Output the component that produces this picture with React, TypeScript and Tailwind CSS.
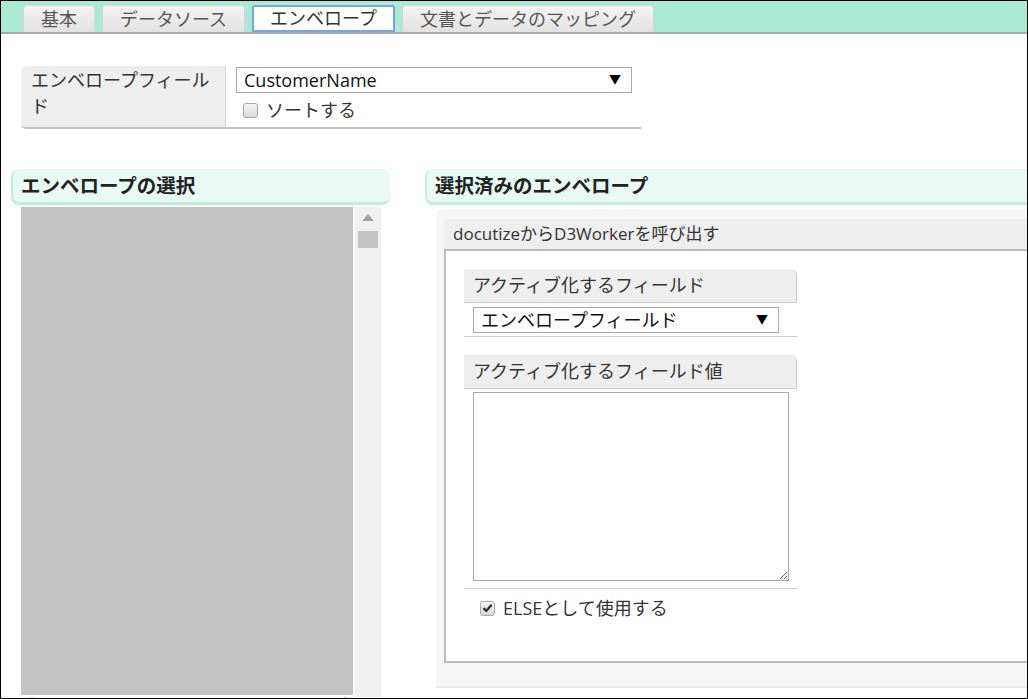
import React from "react";

const font = { fontFamily: '"Open Sans","Noto Sans CJK JP",sans-serif' };

function Tab({ label, active }: { label: string; active?: boolean }) {
  return active ? (
    <div className="h-[27px] px-[16px] border-2 border-[#78a4ea] bg-white rounded-t-[3px] text-[18px] leading-[23px] text-[#333] flex items-center">
      {label}
    </div>
  ) : (
    <div className="h-[27px] px-[17px] border border-[#d8d8d8] border-b-0 bg-gradient-to-b from-[#f4f4f4] to-[#e2e2e2] rounded-t-[4px] text-[18px] leading-[25px] text-[#555] flex items-center">
      {label}
    </div>
  );
}

function Check({ checked }: { checked?: boolean }) {
  return (
    <span className="inline-flex w-[15px] h-[15px] rounded-[3px] border border-[#a9a9a9] bg-gradient-to-b from-[#f4f4f4] to-[#d9d9d9] items-center justify-center shrink-0">
      {checked && (
        <svg width="11" height="10" viewBox="0 0 11 10">
          <path d="M1.5 5.2 L4.2 8 L9.6 1.8" fill="none" stroke="#333" strokeWidth="2.4" strokeLinejoin="round" />
        </svg>
      )}
    </span>
  );
}

function FakeSelect({ value, w }: { value: string; w: string }) {
  return (
    <div className={`${w} h-[26px] border border-[#a9a9a9] bg-white flex items-center justify-between pl-[7px] pr-[10px] text-[18px] text-[#111]`}>
      <span className="leading-[24px]">{value}</span>
      <span className="text-[12px] leading-none text-black">▼</span>
    </div>
  );
}

export default function App() {
  return (
    <div style={font} className="w-[1028px] h-[699px] border border-black bg-white overflow-hidden">
      {/* Tab bar */}
      <div className="h-[33px] bg-[#aae9d4] border-b-2 border-[#a9a9a9] flex items-end gap-[7px] pl-[22px] pt-[4px]">
        <Tab label="基本" />
        <Tab label="データソース" />
        <Tab label="エンベロープ" active />
        <Tab label="文書とデータのマッピング" />
      </div>

      {/* Form row */}
      <div className="mt-[32px] ml-[20px] w-[620px] flex border-b-2 border-[#c4c4c4] rounded-bl-[5px]">
        <div className="w-[205px] bg-[#eeeeee] rounded-tl-[5px] rounded-bl-[5px] pl-[10px] pr-[8px] pt-[1px] pb-[8px] text-[18px] leading-[26px] text-[#333] border-r border-[#d4d4d4]">
          エンベロープフィールド
        </div>
        <div className="flex-1 pl-[10px] pt-[1px]">
          <FakeSelect value="CustomerName" w="w-[396px]" />
          <div className="flex items-center mt-[6px] ml-[7px] gap-[8px] text-[18px] leading-[22px] text-[#333]">
            <Check />
            <span>ソートする</span>
          </div>
        </div>
      </div>

      {/* Columns */}
      <div className="mt-[40px] flex">
        {/* Left column */}
        <div className="ml-[10px] w-[379px] shrink-0">
          <div className="h-[36px] bg-[#e9f9f4] border-l-2 border-b-[3px] border-[#c0eedc] rounded-[8px] flex items-center pl-[8px] text-[19.5px] font-bold text-[#222]">
            エンベロープの選択
          </div>
          <div className="mt-[2px] ml-[10px] flex gap-[2px]">
            <div className="w-[332px] h-[488px] bg-[#c3c3c3]" />
            <div className="w-[26px] h-[490px] bg-[#f0f0f0] flex flex-col items-center pt-[7px]">
              <svg width="12" height="7" viewBox="0 0 12 7">
                <path d="M0 7 L6 0 L12 7 Z" fill="#a3a3a3" />
              </svg>
              <div className="mt-[10px] w-[20px] h-[17px] bg-[#c3c3c3]" />
            </div>
          </div>
          <div className="ml-[20px] w-[315px] h-[4px] border-l-2 border-r-2 border-[#c3c3c3]" />
        </div>

        {/* Right column */}
        <div className="ml-[35px] w-[700px] shrink-0">
          <div className="h-[36px] bg-[#e9f9f4] border-l-2 border-b-[3px] border-[#c0eedc] rounded-[8px] flex items-center pl-[8px] text-[19.5px] font-bold text-[#222]">
            選択済みのエンベロープ
          </div>
          <div className="mt-[4px] ml-[11px] bg-[#f6f6f6] rounded-tl-[6px] pt-[10px] pl-[8px] pb-[23px] border-b-2 border-[#ececec]">
            <div className="h-[30px] bg-[#eeeeee] rounded-tl-[5px] flex items-center pl-[9px] text-[17px] text-[#333]">
              docutizeからD3Workerを呼び出す
            </div>
            <div className="h-[414px] bg-white border-2 border-r-0 border-[#bbbbbb] pl-[18px] pt-[18px]">
              <div className="w-[333px]">
                <div className="h-[34px] bg-[#eeeeee] rounded-tr-[6px] border-r border-b border-[#cccccc] pl-[9px] flex items-center text-[18px] text-[#333]">
                  アクティブ化するフィールド
                </div>
                <div className="pl-[9px] pt-[4px] pb-[3px] border-b border-[#cccccc]">
                  <FakeSelect value="エンベロープフィールド" w="w-[306px]" />
                </div>
                <div className="mt-[18px] h-[34px] bg-[#eeeeee] rounded-tr-[6px] border-r border-b border-[#cccccc] pl-[9px] flex items-center text-[18px] text-[#333]">
                  アクティブ化するフィールド値
                </div>
                <div className="pl-[9px] pt-[3px] pb-[7px] border-b border-[#cccccc]">
                  <textarea className="block w-[316px] h-[189px] border border-[#a9a9a9] bg-white outline-none" />
                </div>
                <div className="flex items-center pl-[16px] pt-[8px] gap-[8px] text-[18px] leading-[22px] text-[#333]">
                  <Check checked />
                  <span>ELSEとして使用する</span>
                </div>
              </div>
            </div>
          </div>
        </div>
      </div>
    </div>
  );
}
